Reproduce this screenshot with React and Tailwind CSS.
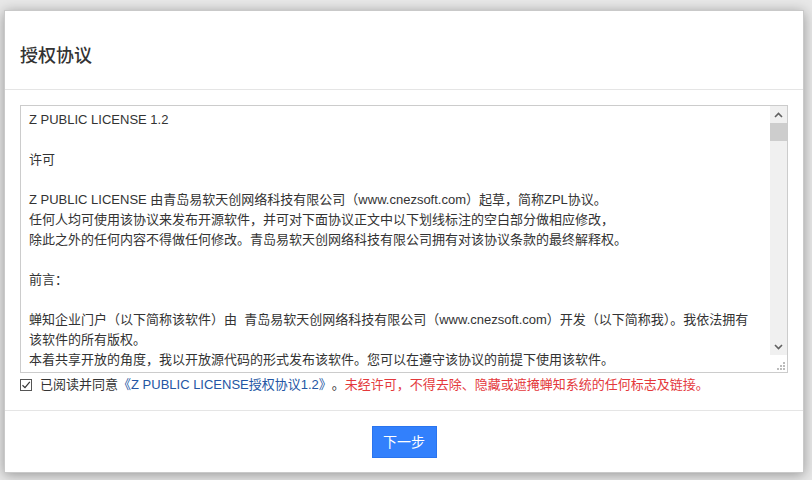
import React from "react";

const FONT = { fontFamily: '"Liberation Sans", Arial, "Noto Sans CJK SC", sans-serif' };

const lines = [
  "Z PUBLIC LICENSE 1.2",
  "",
  "许可",
  "",
  "Z PUBLIC LICENSE 由青岛易软天创网络科技有限公司（www.cnezsoft.com）起草，简称ZPL协议。",
  "任何人均可使用该协议来发布开源软件，并可对下面协议正文中以下划线标注的空白部分做相应修改，",
  "除此之外的任何内容不得做任何修改。青岛易软天创网络科技有限公司拥有对该协议条款的最终解释权。",
  "",
  "前言：",
  "",
  "蝉知企业门户（以下简称该软件）由  青岛易软天创网络科技有限公司（www.cnezsoft.com）开发（以下简称我）。我依法拥有",
  "该软件的所有版权。",
  "本着共享开放的角度，我以开放源代码的形式发布该软件。您可以在遵守该协议的前提下使用该软件。",
];

function Scrollbar() {
  return (
    <div className="flex flex-col w-[17px] h-full">
      <div className="flex-1 flex flex-col bg-[#f0f0f0]">
        <div className="h-[17px] flex items-center justify-center">
          <svg width="9" height="6" viewBox="0 0 9 6">
            <path d="M1 5 L4.5 1.5 L8 5" stroke="#606060" strokeWidth="1.6" fill="none" />
          </svg>
        </div>
        <div className="h-[18px] bg-[#cdcdcd]" />
        <div className="flex-1" />
        <div className="h-[17px] flex items-center justify-center">
          <svg width="9" height="6" viewBox="0 0 9 6">
            <path d="M1 1 L4.5 4.5 L8 1" stroke="#606060" strokeWidth="1.6" fill="none" />
          </svg>
        </div>
      </div>
      <div className="h-[17px] bg-white flex items-end justify-end pr-[2px] pb-[2px]">
        <svg width="8" height="8" viewBox="0 0 8 8">
          <rect x="6" y="0" width="2" height="2" fill="#bcbcbc" />
          <rect x="3" y="3" width="2" height="2" fill="#bcbcbc" />
          <rect x="6" y="3" width="2" height="2" fill="#bcbcbc" />
          <rect x="0" y="6" width="2" height="2" fill="#bcbcbc" />
          <rect x="3" y="6" width="2" height="2" fill="#bcbcbc" />
          <rect x="6" y="6" width="2" height="2" fill="#bcbcbc" />
        </svg>
      </div>
    </div>
  );
}

export default function App() {
  return (
    <div className="w-[812px] h-[480px] bg-[#e8e8e8] overflow-hidden pt-[10px] pl-[4px]" style={FONT}>
      <div className="w-[800px] h-[463px] bg-white border border-[#c9c9c9] shadow-[0_2px_12px_rgba(0,0,0,0.35)] flex flex-col">
        <div className="h-[79px] border-b border-[#e5e5e5] pl-[15px] pt-[33px]">
          <div className="text-[18px] leading-[24px] text-[#333] font-medium">授权协议</div>
        </div>
        <div className="h-[321px] border-b border-[#e5e5e5] pl-[15px] pt-[15px]">
          <div className="w-[768px] h-[268px] border border-[#cccccc] flex overflow-hidden">
            <div className="flex-1 pl-[8px] pt-[4px] text-[13px] leading-[20px] text-[#333] overflow-hidden">
              {lines.map((l, i) => (
                <div key={i} className="h-[20px] whitespace-pre">{l}</div>
              ))}
            </div>
            <Scrollbar />
          </div>
          <div className="flex items-center h-[24px] mt-[0px] text-[13px] text-[#333]">
            <div className="w-[12px] h-[12px] border border-[#555] bg-white flex items-center justify-center mr-[8px]">
              <svg width="10" height="10" viewBox="0 0 10 10">
                <path d="M1.5 5.2 L4 7.6 L8.8 1.8" stroke="#333" strokeWidth="1.2" fill="none" />
              </svg>
            </div>
            <span>已阅读并同意</span>
            <span className="text-[#2456a4]">《Z PUBLIC LICENSE授权协议1.2》</span>
            <span>。</span>
            <span className="text-[#e4393c]">未经许可，不得去除、隐藏或遮掩蝉知系统的任何标志及链接。</span>
          </div>
        </div>
        <div className="flex-1 flex justify-center pt-[15px]">
          <button className="w-[65px] h-[32px] bg-[#3280fc] border border-[#2a74ee] text-white text-[14px]">下一步</button>
        </div>
      </div>
    </div>
  );
}
